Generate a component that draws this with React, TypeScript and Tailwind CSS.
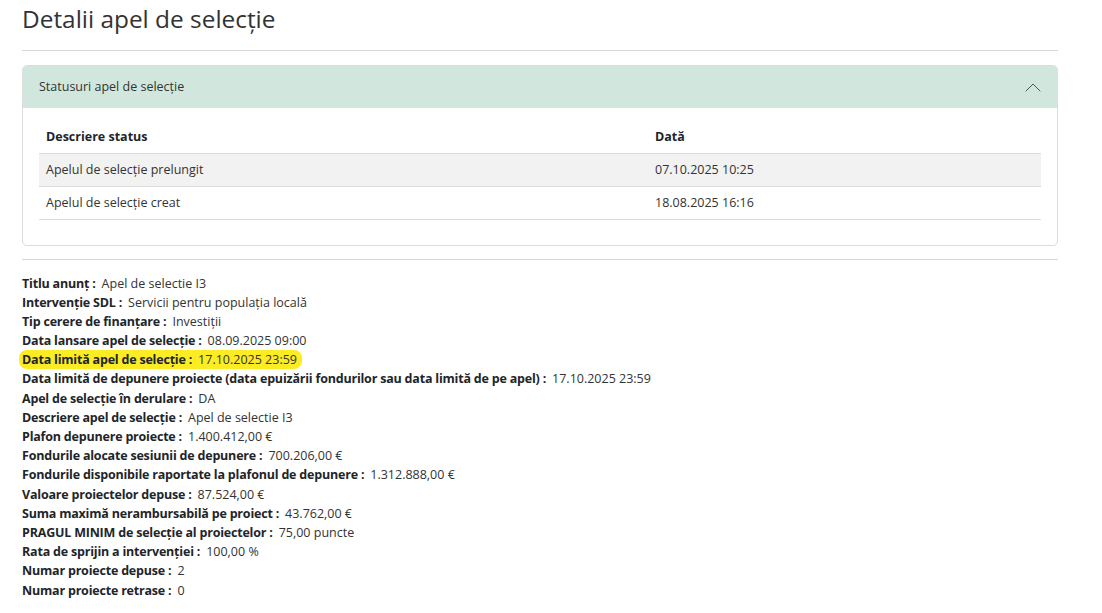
const rows: { label: string; value: string; mark?: boolean }[] = [
  { label: "Titlu anunț", value: "Apel de selectie I3" },
  { label: "Intervenție SDL", value: "Servicii pentru populația locală" },
  { label: "Tip cerere de finanțare", value: "Investiții" },
  { label: "Data lansare apel de selecție", value: "08.09.2025 09:00" },
  { label: "Data limită apel de selecție", value: "17.10.2025 23:59", mark: true },
  {
    label: "Data limită de depunere proiecte (data epuizării fondurilor sau data limită de pe apel)",
    value: "17.10.2025 23:59",
  },
  { label: "Apel de selecție în derulare", value: "DA" },
  { label: "Descriere apel de selecție", value: "Apel de selectie I3" },
  { label: "Plafon depunere proiecte", value: "1.400.412,00 €" },
  { label: "Fondurile alocate sesiunii de depunere", value: "700.206,00 €" },
  { label: "Fondurile disponibile raportate la plafonul de depunere", value: "1.312.888,00 €" },
  { label: "Valoare proiectelor depuse", value: "87.524,00 €" },
  { label: "Suma maximă nerambursabilă pe proiect", value: "43.762,00 €" },
  { label: "PRAGUL MINIM de selecție al proiectelor", value: "75,00 puncte" },
  { label: "Rata de sprijin a intervenției", value: "100,00 %" },
  { label: "Numar proiecte depuse", value: "2" },
  { label: "Numar proiecte retrase", value: "0" },
];

const statuses = [
  { desc: "Apelul de selecție prelungit", date: "07.10.2025 10:25" },
  { desc: "Apelul de selecție creat", date: "18.08.2025 16:16" },
];

function DetailRow({ label, value, mark }: { label: string; value: string; mark?: boolean }) {
  const line = (
    <>
      <span className="font-bold tracking-[-0.2px] text-[#212529]">{label} :</span>
      <span className="ml-[6px] text-[#333]">{value}</span>
    </>
  );
  return (
    <div className="h-[19.2px] leading-[19.2px] whitespace-nowrap">
      {mark ? (
        <span className="-ml-[3px] rounded-[8px] bg-[#fbec24] py-[1px] pl-[3px] pr-[5px]">{line}</span>
      ) : (
        line
      )}
    </div>
  );
}

export default function App() {
  return (
    <div className="min-h-[613px] bg-white px-[22px] pt-[3px] font-['Open_Sans',sans-serif] text-[12.5px] text-[#212529]">
      <div className="w-[1036px]">
        <h1 className="text-[24.4px] font-normal leading-[31px] text-[#333]">Detalii apel de selecție</h1>
        <hr className="mt-[16px] border-t border-[#d6d6d6]" />

        <div className="mt-[14px] overflow-hidden rounded-[5px] border border-[#dcdcdc]">
          <div className="flex h-[42px] items-center justify-between bg-[#d1e7dd] px-[16px]">
            <span className="text-[#333]">Statusuri apel de selecție</span>
            <svg width="16" height="9" viewBox="0 0 16 9" className="mr-[0px]">
              <polyline points="0.7,8.3 8,1 15.3,8.3" fill="none" stroke="#555" strokeWidth="1" />
            </svg>
          </div>
          <div className="px-[16px] pb-[25px] pt-[12px]">
            <table className="w-full border-collapse">
              <thead>
                <tr className="h-[33px] border-b border-[#dcdcdc] text-left">
                  <th className="w-[616px] pl-[7px] pt-[2px] font-bold">Descriere status</th>
                  <th className="pt-[2px] font-bold">Dată</th>
                </tr>
              </thead>
              <tbody>
                {statuses.map((s, i) => (
                  <tr
                    key={s.desc}
                    className={`h-[33px] border-b border-[#dcdcdc] ${i === 0 ? "bg-[#f2f2f2]" : "bg-white"}`}
                  >
                    <td className="pl-[7px] pt-[2px] text-[#333]">{s.desc}</td>
                    <td className="pt-[2px] text-[#333]">{s.date}</td>
                  </tr>
                ))}
              </tbody>
            </table>
          </div>
        </div>

        <hr className="mt-[13px] border-t border-[#d6d6d6]" />

        <div className="mt-[14px]">
          {rows.map((r) => (
            <DetailRow key={r.label} {...r} />
          ))}
        </div>
      </div>
    </div>
  );
}
